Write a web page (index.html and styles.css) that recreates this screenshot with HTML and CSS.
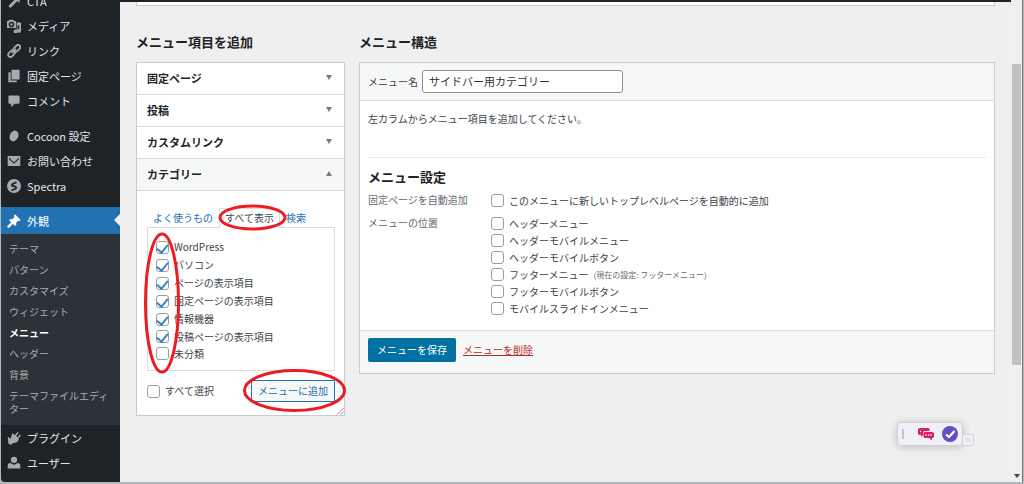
FILE: index.html
```
<!DOCTYPE html>
<html lang="ja">
<head>
<meta charset="utf-8">
<title>メニュー</title>
<link rel="stylesheet" href="styles.css">
</head>
<body>
<div class="window">
  <nav class="sidebar" aria-label="管理メニュー">
    <ul class="nav">
      <li><a href="#"><svg viewBox="0 0 20 20"><path d="M8 3h10v10l-3-3L5 20l-3-3L12 7z"/></svg>CTA</a></li>
      <li><a href="#"><svg viewBox="0 0 20 20"><path fill-rule="evenodd" d="M0 3h2l1-2h6l1 2h3v10H0zM6.500 4a4 4 0 1 0 0 8 4 4 0 0 0 0-8zM6.500 6.200a1.800 1.800 0 1 1 0 3.600 1.800 1.800 0 0 1 0-3.600zM14 5h6v12a2.800 2.800 0 1 1-2.500-2.800V9H15v8.500A2.800 2.800 0 1 1 12.500 15H14z"/></svg>メディア</a></li>
      <li><a href="#"><svg viewBox="0 0 20 20"><g fill="none" stroke="currentColor" stroke-width="2.600"><rect x="8.500" y="3" width="11" height="6.500" rx="3.200" transform="rotate(-45 14 6.200)"/><rect x="1" y="10.500" width="11" height="6.500" rx="3.200" transform="rotate(-45 6.500 13.800)"/><path d="M7 13l6-6"/></g></svg>リンク</a></li>
      <li><a href="#"><svg viewBox="0 0 20 20"><path d="M6.500 1H18v14H6.500zM2 4.500h3.300v11.800H14V19H2z"/></svg>固定ページ</a></li>
      <li><a href="#"><svg viewBox="0 0 20 20"><path d="M4 2h12q2 0 2 2v8q0 2-2 2h-5l-5 5v-5H4q-2 0-2-2V4q0-2 2-2z"/></svg>コメント</a></li>
      <li class="group"><a href="#"><svg viewBox="0 0 20 20"><ellipse cx="10" cy="10" rx="6" ry="8" transform="rotate(25 10 10)"/></svg>Cocoon 設定</a></li>
      <li><a href="#"><svg viewBox="0 0 20 20"><path fill-rule="evenodd" d="M1 3h18v14H1zM3 5l7 7 7-7v2.500l-7 6.500-7-6.500z"/></svg>お問い合わせ</a></li>
      <li><a href="#"><svg viewBox="0 0 20 20"><circle cx="10" cy="10" r="10"/><path d="M13.500 4.500L7.500 7.500q-1.500 1.500.5 2.500l4 1q2 1 .5 2.500l-6 3" fill="none" stroke="#1d2327" stroke-width="2.600"/></svg>Spectra</a></li>
      <li class="group current"><a href="#"><svg viewBox="0 0 20 20"><path d="M10 2l1.500-1.500 8 8-1.500 1.500-2-.5-3 3 .5 2.500-2 2-3-3-4.500 5q-2 1.500-3.500 0-.5-1.500 1-3L6 12 3 9l2-2 2.500.5L10.500 4.500z"/></svg>外観</a>
        <ul class="submenu">
          <li><a href="#">テーマ</a></li>
          <li><a href="#">パターン</a></li>
          <li><a href="#">カスタマイズ</a></li>
          <li><a href="#">ウィジェット</a></li>
          <li><a href="#" class="active" aria-current="page">メニュー</a></li>
          <li><a href="#">ヘッダー</a></li>
          <li><a href="#">背景</a></li>
          <li><a href="#">テーマファイルエディター</a></li>
        </ul>
      </li>
      <li><a href="#"><svg viewBox="0 0 20 20"><path d="M11 6l4-4.500 1.500 1.500L13 7l2 2 3.500-4L20 6.500 16 11l1 1q-2 5-8 5l-4 3-3-2L1 8l4 3 3-8z"/></svg>プラグイン</a></li>
      <li><a href="#"><svg viewBox="0 0 20 20"><circle cx="10" cy="5.500" r="4.500"/><path d="M1 18v-4q0-4 4-4l5 3 5-3q4 0 4 4v4z"/></svg>ユーザー</a></li>
    </ul>
  </nav>

  <main class="content">
    <div class="notice"></div>
    <div class="columns">
      <section class="add-items">
        <h2>メニュー項目を追加</h2>
        <div class="accordion">
          <h3><button type="button">固定ページ<span class="arrow"></span></button></h3>
          <h3><button type="button">投稿<span class="arrow"></span></button></h3>
          <h3><button type="button">カスタムリンク<span class="arrow"></span></button></h3>
          <h3><button type="button" class="open" aria-expanded="true">カテゴリー<span class="arrow"></span></button></h3>
          <div class="panel">
            <div class="tabs">
              <a href="#">よく使うもの</a>
              <a href="#" class="selected">すべて表示</a>
              <a href="#">検索</a>
            </div>
            <div class="checklist">
              <label><input type="checkbox" checked>WordPress</label>
              <label><input type="checkbox" checked>パソコン</label>
              <label><input type="checkbox" checked>ページの表示項目</label>
              <label><input type="checkbox" checked>固定ページの表示項目</label>
              <label><input type="checkbox" checked>情報機器</label>
              <label><input type="checkbox" checked>投稿ページの表示項目</label>
              <label><input type="checkbox">未分類</label>
            </div>
            <div class="panel-actions">
              <label><input type="checkbox">すべて選択</label>
              <button type="button" class="secondary">メニューに追加</button>
            </div>
          </div>
          <svg class="grip" viewBox="0 0 8 8"><path d="M1 7.500L7.500 1M4.500 7.500L7.500 4.500"/></svg>
          <svg class="marks" viewBox="0 0 212 354" aria-hidden="true">
            <ellipse cx="26" cy="241" rx="16.500" ry="69"/>
            <ellipse cx="116.500" cy="155.500" rx="32.500" ry="11.500"/>
            <ellipse cx="158.500" cy="328.500" rx="50" ry="20"/>
          </svg>
        </div>
      </section>

      <section class="structure">
        <h2>メニュー構造</h2>
        <form class="card">
          <div class="card-head">
            <label for="menu-name">メニュー名</label>
            <input type="text" id="menu-name" value="サイドバー用カテゴリー">
          </div>
          <div class="card-body">
            <p>左カラムからメニュー項目を追加してください。</p>
            <div class="settings">
              <h2>メニュー設定</h2>
              <div class="setting" role="group" aria-labelledby="auto-add">
                <span class="legend" id="auto-add">固定ページを自動追加</span>
                <div class="options">
                  <label><input type="checkbox">このメニューに新しいトップレベルページを自動的に追加</label>
                </div>
              </div>
              <div class="setting" role="group" aria-labelledby="locations">
                <span class="legend" id="locations">メニューの位置</span>
                <div class="options">
                  <label><input type="checkbox">ヘッダーメニュー</label>
                  <label><input type="checkbox">ヘッダーモバイルメニュー</label>
                  <label><input type="checkbox">ヘッダーモバイルボタン</label>
                  <label><input type="checkbox">フッターメニュー<small>(現在の設定: フッターメニュー)</small></label>
                  <label><input type="checkbox">フッターモバイルボタン</label>
                  <label><input type="checkbox">モバイルスライドインメニュー</label>
                </div>
              </div>
            </div>
          </div>
          <div class="card-foot">
            <button type="button" class="primary">メニューを保存</button>
            <a href="#" class="delete">メニューを削除</a>
          </div>
        </form>
      </section>
    </div>
  </main>

  <div class="scrollbar"><span class="thumb"></span><span class="down"></span></div>

  <div class="floating">
    <div class="tools">
      <span class="handle"></span>
      <svg class="chat" viewBox="0 0 16 13"><path d="M2 0h8q1.500 0 1.500 1.500V3H6.500Q5 3 5 5v2L3 9V7H2Q0 7 0 5.500v-4Q0 0 2 0z"/><path d="M7 4h7q2 0 2 1.500v3q0 1.500-2 1.500v2.500L11.500 10H7Q5.500 10 5.500 8.500v-3Q5.500 4 7 4z"/><path d="M7.500 7h1.200m1.300 0h1.200m1.300 0h1.200M2 3.500h1" stroke="#fff" stroke-width="1.300"/></svg>
      <svg class="done" viewBox="0 0 16 16"><circle cx="8" cy="8" r="8"/><path d="M4 8.500L7 11l5.500-6" fill="none" stroke="#fff" stroke-width="2.200"/></svg>
    </div>
    <div class="expand"><svg viewBox="0 0 8 8"><path d="M1 1l2.500 3L1 7M4.500 1L7 4 4.500 7"/></svg></div>
  </div>
</div>
</body>
</html>
```
FILE: styles.css
```
* { box-sizing: border-box; }

body {
  margin: 0;
  background: #c9cbcd;
  color: #3c434a;
  font: 10px/16px "Noto Sans CJK JP", sans-serif;
}

h2, h3, p, ul { margin: 0; padding: 0; }
ul { list-style: none; }
a { color: #2271b1; text-decoration: none; }
button, input { font: inherit; color: inherit; }

.window {
  position: relative;
  display: flex;
  height: 100vh;
  overflow: hidden;
  padding: 0 1px 2px 1px;
  background: #b4b7ba;
}

/* Sidebar */
.sidebar {
  flex: 0 0 119px;
  overflow: hidden;
  background: #1d2327;
  border-bottom-left-radius: 4px;
}

.nav { margin-top: -12px; }
.nav > li > a {
  display: flex;
  align-items: center;
  gap: 6px;
  height: 25px;
  padding-left: 6px;
  color: #e4e5e6;
  font-size: 11px;
}
.nav svg {
  width: 14px;
  height: 14px;
  fill: currentColor;
  color: #a7aaad;
}
.nav .group { margin-top: 10px; }
.nav .current { margin-top: 9px; }
.nav .current > a {
  position: relative;
  height: 27px;
  background: #2271b1;
  color: #fff;
}
.nav .current svg { color: #fff; }
.nav .current > a::after {
  content: "";
  position: absolute;
  right: 0;
  top: 7px;
  border: 6px solid transparent;
  border-left: 0;
  border-right-color: #efefef;
}

.submenu {
  padding: 4px 0 6px;
  background: #2c3338;
}
.submenu a {
  display: block;
  padding: 4px 8px;
  color: #a8acb0;
  line-height: 13px;
}
.submenu .active { color: #fff; font-weight: 700; }

/* Content */
.content {
  flex: 1;
  min-width: 0;
  padding: 0 16px;
  background: #efefef;
  border-top: 2px solid #1d2327;
}
.notice {
  height: 4px;
  background: #fff;
  border: 1px solid #c9cbcd;
  border-top: 0;
}
.columns {
  display: flex;
  gap: 14px;
  padding-top: 27px;
}
h2 {
  color: #1d2327;
  font-size: 13px;
  line-height: 18px;
}
.add-items { flex: 0 0 209px; }
.structure { flex: 1; min-width: 0; }
.columns section > h2 { margin-bottom: 11px; }

.accordion {
  position: relative;
  background: #fff;
  border: 1px solid #c9cbcd;
}
.accordion h3 { border-bottom: 1px solid #dcdcde; }
.accordion h3 button {
  display: flex;
  align-items: center;
  justify-content: space-between;
  width: 100%;
  height: 31px;
  padding: 0 12px 2px 10px;
  border: 0;
  background: #fff;
  color: #1d2327;
  font-size: 11px;
  font-weight: 700;
}
.accordion h3 .open { background: #f6f7f7; }
.arrow {
  border: 3px solid transparent;
  border-top: 5px solid #787c82;
  border-bottom: 0;
}
.open .arrow {
  border-top: 0;
  border-bottom: 5px solid #787c82;
}

.panel { padding: 17px 9px 13px 10px; }
.tabs { display: flex; }
.tabs a {
  padding: 1px 5px 2px;
  margin-bottom: -1px;
  border: 1px solid transparent;
  border-bottom: 0;
}
.tabs .selected {
  background: #fff;
  border-color: #dcdcde;
  color: #3c434a;
}
.checklist {
  padding: 10px 8px 8px;
  border: 1px solid #dcdcde;
}
label { display: flex; align-items: center; }
.checklist label { height: 18px; gap: 5px; }
.checklist label:nth-child(n+6) { height: 17px; }

input[type="checkbox"] {
  appearance: none;
  display: flex;
  justify-content: center;
  align-items: flex-start;
  flex: none;
  width: 13px;
  height: 13px;
  margin: 0;
  border: 1px solid #9a9da2;
  border-radius: 3px;
  background: #fff;
}
input[type="checkbox"]:checked::before {
  content: "";
  width: 5px;
  height: 9px;
  border: solid #3582c4;
  border-width: 0 2px 2px 0;
  transform: rotate(40deg);
}
.panel-actions {
  display: flex;
  align-items: center;
  justify-content: space-between;
  margin-top: 9px;
}
.panel-actions label { gap: 5px; }
.secondary {
  height: 22px;
  padding: 0 6px;
  background: #f6f7f7;
  border: 1px solid #2271b1;
  border-radius: 1px;
  color: #2271b1;
}
.grip {
  position: absolute;
  right: 0;
  bottom: 0;
  width: 8px;
  height: 8px;
  fill: none;
  stroke: #8c8f94;
}
.marks {
  position: absolute;
  top: -1px;
  left: -1px;
  width: 212px;
  height: 354px;
  fill: none;
  stroke: #ec1c24;
  stroke-width: 3;
  pointer-events: none;
}

/* Menu form */
.card {
  background: #fff;
  border: 1px solid #c9cbcd;
}
.card-head {
  display: flex;
  align-items: center;
  gap: 4px;
  padding: 7px 8px;
  background: #f6f7f7;
  border-bottom: 1px solid #dcdcde;
}
.card-head input {
  width: 201px;
  height: 23px;
  padding: 0 6px 2px;
  border: 1px solid #8c8f94;
  border-radius: 3px;
  background: #fff;
  color: #2c3338;
  font-size: 11px;
}
.card-body { padding: 10px 8px 13px; }
.settings {
  margin-top: 30px;
  padding-top: 10px;
  border-top: 1px solid #eaeaea;
}
.setting {
  display: grid;
  grid-template-columns: 123px 1fr;
  margin-top: 6px;
}
.legend { color: #646970; }
.options label { height: 17px; gap: 5px; }
.options small { color: #646970; font-size: 8px; }
.card-foot {
  display: flex;
  align-items: center;
  gap: 7px;
  padding: 7px 8px 11px;
  background: #f6f7f7;
  border-top: 1px solid #dcdcde;
}
.primary {
  height: 24px;
  padding: 0 9px;
  border: 0;
  border-radius: 2px;
  background: #0071a1;
  color: #fff;
}
.delete {
  color: #b32d2e;
  text-decoration: underline;
}

/* Page scrollbar */
.scrollbar {
  display: flex;
  flex: 0 0 12px;
  flex-direction: column;
  align-items: center;
  padding: 64px 0 4px;
  background: #f0f0f0;
  border-right: 1px solid #77797c;
}
.thumb {
  width: 9px;
  height: 301px;
  background: #c1c1c1;
}
.down {
  margin-top: auto;
  border: 3px solid transparent;
  border-top: 4px solid #444;
  border-bottom: 0;
}

/* Floating toolbar */
.floating {
  position: absolute;
  right: 50px;
  bottom: 38px;
  display: flex;
  align-items: flex-end;
}
.tools {
  display: flex;
  align-items: center;
  width: 66px;
  height: 24px;
  padding: 0 4px;
  background: #f0f0f6;
  border: 1px solid #cfd0d8;
  border-radius: 4px;
  box-shadow: 0 1px 8px #00000033;
}
.handle {
  width: 2px;
  height: 10px;
  margin-right: 14px;
  background: #c4c5cc;
}
.chat {
  width: 16px;
  height: 13px;
  fill: #d91f5f;
}
.done {
  width: 16px;
  height: 16px;
  margin-left: auto;
  fill: #6150c1;
}
.expand {
  display: flex;
  align-items: center;
  justify-content: center;
  width: 12px;
  height: 12px;
  margin-left: -1px;
  background: #f0f0f6;
  border: 1px solid #cfd0d8;
  border-radius: 2px;
}
.expand svg {
  width: 6px;
  height: 6px;
  fill: none;
  stroke: #b9bac4;
}
```
